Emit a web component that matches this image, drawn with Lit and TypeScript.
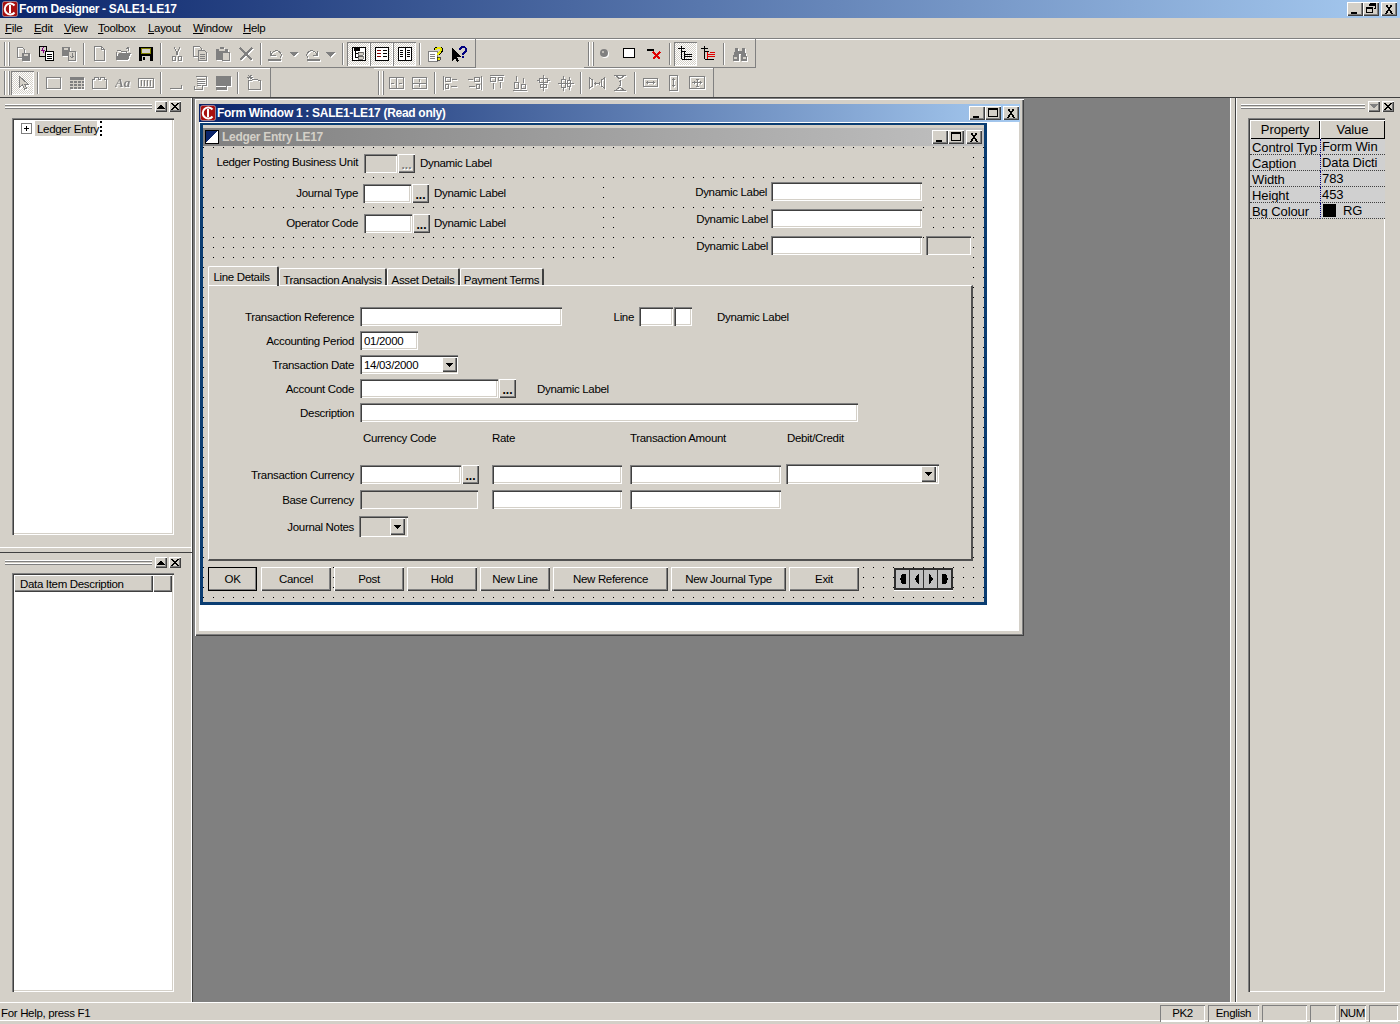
import { LitElement, html, css, svg, nothing } from "lit";
import { customElement } from "lit/decorators.js";

const G = "#808080";
const line = (d: string, c = G) => svg`<path d=${d} fill="none" stroke=${c}/>`;
const fill = (d: string, c = G) => svg`<path d=${d} fill=${c}/>`;

const ICONS: Record<string, any> = {
  docs1: svg`${line("M2.5 1.5h5l2 2v8h-7z")}${fill("M7 7h8v8H7z")}${fill("M9 8h4v2H9z", "#d4d0c8")}`,
  docs2: svg`${line("M1.5 .5h7v10h-7z", "#000")}<path d="M7.5 5.5h8v9h-8z" fill="#fff" stroke="#000"/>${line("M9 8h5M9 10h5M9 12h5", "#000")}${line("M5.5 1.5l-2 3h3l-2 3", "#800080")}`,
  docs3: svg`${fill("M1 1h8v9H1z")}${fill("M3 2h4v2H3z", "#d4d0c8")}<path d="M7.5 5.5h7v9h-7z" fill="#d4d0c8" stroke=${G}/>${line("M11 7v5M9 10l2 2 2-2")}`,
  new: line("M2.5 .5h7l3 3v11h-10zM9.5 .5v3h3"),
  open: svg`${line("M1.5 4.5h4l1 1h5v2M11.5 2.5l2-1v3")}${fill("M1 14V6h1v5l2-4h12l-3 7z")}`,
  save: svg`<path d="M1 1h14v14H1z" fill="#000"/><path d="M3 2h10v6H3z" fill="#808000"/><path d="M4 10h8v5H4z" fill="#d4d0c8"/><path d="M5 11h2v3H5z" fill="#000"/><path d="M4 3h8v4H4z" fill="#d4d0c8"/>`,
  cut: svg`${line("M5 1l4 8M11 1L7 9")}${line("M3.5 10.5h3v4h-3zM9.5 10.5h3v4h-3z")}`,
  copy: svg`${line("M1.5 .5h6l2 2v8h-8z")}<path d="M6.5 4.5h6l2 2v8h-8z" fill="#d4d0c8" stroke=${G}/>${line("M8 8h5M8 10h5M8 12h5")}`,
  paste: svg`${fill("M1 3h4V1h4v2h4v11H1z")}<path d="M7.5 6.5h7v8h-7z" fill="#d4d0c8" stroke=${G}/>${fill("M4 3h6v2H4z", "#d4d0c8")}`,
  del: svg`<path d="M2 2l12 12M14 2L2 14" stroke=${G} stroke-width="2" fill="none"/>`,
  undo: svg`${line("M2.5 4.5v5h5M3 9c2-5 8-6 10-1 1 2 0 3-1 4")}${fill("M0 13h13v2H0z")}`,
  redo: svg`${line("M13.5 4.5v5h-5M13 9C11 4 5 3 3 8c-1 2 0 3 1 4")}${fill("M3 13h13v2H3z")}`,
  drop: fill("M3 6h9l-4.5 5z"),
  tree: svg`<path d="M1.5 1.5h13v13h-13z" fill="#fff" stroke="#000"/>${line("M4.5 3v9M4 3.5h5M5 7.500h6M5 11.500h7", "#000")}<path d="M7 6h5v3H7zM7 10h5v3H7z" fill="#d4d0c8" stroke="#000" stroke-width=".5"/><path d="M3 2h6v3H3z" fill="#000"/>`,
  list: svg`<path d="M1.5 1.5h13v13h-13z" fill="#fff" stroke="#000"/>${line("M3 4.5h4M3 7.5h4M3 10.5h4", "#800000")}${line("M9 4.5h4M9 7.5h4M9 10.5h4", "#000")}`,
  book: svg`<path d="M1.5 1.5h13v13h-13z" fill="#fff" stroke="#000"/>${line("M8 2v12M3 4.5h3M3 6.5h3M3 8.5h3M3 10.5h3M10 4.5h3M10 6.5h3M10 8.5h3M10 10.5h3", "#000")}`,
  helpdoc: svg`<path d="M.5 5.5h9v10h-9z" fill="#fff" stroke=${G}/>${line("M2 8h5M2 10h5M2 12h5")}<path d="M6.5 4c0-4 8-4 8 0 0 3-3 2-3 5" fill="none" stroke="#000" stroke-width="1"/><path d="M8 4c0-2 5-3 5 0 0 2-3 2-3 5" fill="none" stroke="#e8e800" stroke-width="2"/><path d="M9 11h3v3H9z" fill="#e8e800" stroke="#000" stroke-width=".6"/>`,
  helparrow: svg`<path d="M1 1v14l3-3 2 4 2-1-2-4h4z" fill="#000"/><path d="M9 4c0-4 6-4 6 0 0 3-3 2-3 5" fill="none" stroke="#000080" stroke-width="2"/><path d="M11 10h2v2h-2z" fill="#000080"/>`,
  dot: svg`<circle cx="7" cy="7" r="4" fill=${G} shape-rendering="auto"/><circle cx="6" cy="6" r="1" fill="#d4d0c8" shape-rendering="auto"/>`,
  rect: svg`<path d="M2.5 2.5h11v9h-11z" fill="#fff" stroke="#000"/>`,
  redx: svg`${fill("M1 3h7v2H1z", "#000")}<path d="M7 6l7 7M14 6l-7 7" stroke="#e00000" stroke-width="2" fill="none"/>`,
  t1: svg`${line("M3.5 0v13M0 2.5h7M4 5.5h4M6.5 6v7M7 8.5h7M7 10.5h7M4 13.5h10", "#000")}`,
  t2: svg`${line("M3.5 0v13M0 2.5h7M4 5.5h4M4 13.5h9", "#000")}${line("M6.5 6v7M7 8.5h7M7 10.5h7M9 6.5h5", "#e00000")}`,
  binoc: svg`${fill("M3 2h3v3h4V2h3v3l2 6v4H9V8H7v7H1v-4l2-6z")}${fill("M2 11h3v2H2zM11 11h3v2h-3z", "#d4d0c8")}`,
  arrow: svg`<path d="M4.5 1.5v11l3-2.5 2 4 2-1-2-4h3.500z" fill="#d4d0c8" stroke=${G}/>`,
  box: svg`<path d="M.5 2.500h14v11h-14z" fill="none" stroke=${G}/>`,
  grid: svg`${fill("M1 2h14v12H1z")}${line("M1 5.500h14M1 8.500h14M1 11.500h14M4.500 5v9M8.500 5v9M12.500 5v9", "#d4d0c8")}`,
  tab: line("M.5 4.500v9h14v-9h-2v-2h-4v2h-2v-2h-4v2z"),
  aa: svg`<text x="0" y="12" font-family="'Liberation Serif',serif" font-style="italic" font-weight="700" font-size="13" letter-spacing="0" fill=${G}>Aa</text>`,
  ab: svg`${line("M.5 3.500h15v9H.5z")}${line("M3.500 5v6M6.500 5v6M9.500 5v6M12.500 5v6")}`,
  corner: line("M1 13.500h11.500V10"),
  form: svg`${line("M3.500 1.500h11v9h-4v4h-8v-4")}${line("M5 4h8M5 6h8M5 8h8M5 10h4")}`,
  shadow: svg`${fill("M1 1h15v10h-4v4H1z")}${fill("M1 11h10v1H1z", "#fff")}`,
  star: svg`${line("M2.500 5.500h3l1-1h5l1 1h2v9h-12z")}${line("M4 0v4M1 2h6M2 0l4 4M6 0L2 4")}`,
  c1: svg`${line("M.5 2.500h14v11H.5zM7.500 3v10M2 8h3M10 8h3")}`,
  c2: svg`${line("M.5 2.500h14v11H.5zM1 8h13M7.500 4v3M7.500 9v3")}`,
  a1: svg`${line("M.5 1v14M2.500 2.500h5v4h-5zM2.500 9.500h3v4h-3zM9 4.500h5M7.500 11.500h6")}`,
  a2: svg`${line("M15.500 1v14M8.500 2.500h5v4h-5zM10.500 9.500h3v4h-3zM2 4.500h5M3 11.500h6")}`,
  a3: svg`${line("M1 .5h14M1.500 2.500h5v4h-5zM9.500 2.500h4v3h-4zM4 8v6M11.500 7v6")}`,
  a4: svg`${line("M1 15.500h14M2.500 7.500h4v6h-4zM9.500 9.500h4v4h-4zM4.500 1v5M11.500 3v5")}`,
  a5: svg`${line("M8.500 0v16M4.500 3.500h8v4h-8zM5.500 9.500h6v3h-6zM2 5.500h2M13 5.500h2")}`,
  a6: svg`${line("M0 8.500h16M3.500 4.500h4v8h-4zM9.500 5.500h3v6h-3zM5.500 1v3M5.500 13v3M11 2v3M11 12v3")}`,
  s1: svg`${line("M.5 3v10l3-2V5zM15.500 3v10l-3-2V5zM5 8.500h6M6 7v3M10 7v3")}`,
  s2: svg`${line("M2 .5h12M2 15.500h12M4 1l4 3 4-3M4 15l4-3 4 3M8 5v6M7 6h2M7 10h2")}`,
  w1: svg`${line("M.5 3.500h14v8H.5zM3 7.500h9M4.500 6v3M10.500 6v3")}`,
  w2: svg`${line("M3.500 .5h8v15h-8zM7.500 3v9M6 4.500h3M6 10.500h3")}`,
  w3: svg`${line("M.5 1.500h15v12H.5zM3 7.500h10M8 4v7M5 6v3M11 6v3M6.500 4h3M6.500 11h3")}`,
};
const DIS = new Set(["docs1", "docs3", "new", "open", "cut", "copy", "paste", "del", "undo", "redo", "drop", "dot", "binoc", "arrow", "box", "grid", "tab", "aa", "ab", "corner", "form", "shadow", "star", "c1", "c2", "a1", "a2", "a3", "a4", "a5", "a6", "s1", "s2", "w1", "w2", "w3"]);

type Tool = string | { i: string; w?: number; on?: boolean };
type Band = { start: number; end: number; gripGap: number; tools: Tool[] };
const BANDS: Band[][] = [
  [
    { start: 0, end: 476, gripGap: 1, tools: [
      "docs1", "docs2", "docs3", "|", "new", "open", "save", "|", "cut", "copy", "paste", "del", "|",
      { i: "undo", w: 22 }, { i: "drop", w: 15 }, { i: "redo", w: 20 }, { i: "drop", w: 17 }, "|",
      { i: "tree", on: true }, { i: "list", on: true }, { i: "book", on: true }, "|", "helpdoc", "helparrow",
    ] },
    { start: 584, end: 756, gripGap: -1, tools: [
      { i: "dot", w: 24 }, { i: "rect", w: 24 }, { i: "redx", w: 25 }, "|", { i: "t1", on: true }, "t2", "|", "binoc",
    ] },
  ],
  [
    { start: 0, end: 271, gripGap: 1, tools: [
      { i: "arrow", on: true }, "|", "box", "grid", "tab", "aa", "ab", "|", "corner", "form", "shadow", "|", "star",
    ] },
    { start: 374, end: 714, gripGap: 1, tools: [
      "c1", "c2", "|", "a1", "a2", "a3", "a4", "a5", "a6", "|", "s1", "s2", "|", "w1", "w2", "w3",
    ] },
  ],
];

const logo = svg`<svg class="logo" viewBox="0 0 16 16" width="16" height="16"><rect x=".5" y=".5" width="15" height="15" rx="2" fill="#a81010" stroke="#e0e0e0" stroke-width=".5"/><path d="M12.500 4.500A5.500 5.500 0 1 0 12.500 11.500" fill="none" stroke="#fff" stroke-width="2"/><path d="M8 4v8" stroke="#fff" stroke-width="2"/></svg>`;

const GLYPH: Record<string, any> = {
  min: svg`<path d="M3 10h6v2H3z" fill="#000"/>`,
  max: svg`<path d="M2.500 2.500h9v8h-9z" fill="none" stroke="#000"/><path d="M2 2h10v2H2z" fill="#000"/>`,
  res: svg`<path d="M5.500 1.500h6v5h-2M5 2h6v1H5z" fill="none" stroke="#000"/><path d="M2.500 5.500h6v5h-6z" fill="#d4d0c8" stroke="#000"/><path d="M2 5h7v1.500H2z" fill="#000"/>`,
  close: svg`<path d="M3 2.500l2 0 2 3 2-3 2 0-3 4.500 3 4.500-2 0-2-3-2 3-2 0 3-4.500z" fill="#000"/>`,
};
const capBtn = (k: string, cls = "") => html`<span class="cap ${cls}"><svg viewBox="0 0 14 14" width="14" height="14">${GLYPH[k]}</svg></span>`;

const CX = 203, CY = 146;
const at = (x: number, y: number, w: number, h: number) =>
  `left:${x - CX}px;top:${y - CY}px;width:${w}px;height:${h}px`;

const COVERS = [
  [205, 149, 766, 27], [205, 179, 397, 27], [205, 209, 397, 27], [605, 179, 325, 27], [616, 209, 314, 27],
  [616, 239, 350, 20], [207, 262, 764, 302], [773, 179, 150, 25], [773, 206, 150, 25],
];
const LABELS: [string, number, number, "r" | "l"][] = [
  ["Ledger Posting Business Unit", 358, 162, "r"], ["Dynamic Label", 420, 163, "l"],
  ["Journal Type", 358, 193, "r"], ["Dynamic Label", 434, 193, "l"],
  ["Operator Code", 358, 223, "r"], ["Dynamic Label", 434, 223, "l"],
  ["Dynamic Label", 767, 192, "r"], ["Dynamic Label", 768, 219, "r"], ["Dynamic Label", 768, 246, "r"],
  ["Transaction Reference", 354, 317, "r"], ["Line", 634, 317, "r"], ["Dynamic Label", 717, 317, "l"],
  ["Accounting Period", 354, 341, "r"], ["Transaction Date", 354, 365, "r"], ["Account Code", 354, 389, "r"],
  ["Dynamic Label", 537, 389, "l"], ["Description", 354, 413, "r"],
  ["Currency Code", 363, 438, "l"], ["Rate", 492, 438, "l"], ["Transaction Amount", 630, 438, "l"], ["Debit/Credit", 787, 438, "l"],
  ["Transaction Currency", 354, 475, "r"], ["Base Currency", 354, 500, "r"], ["Journal Notes", 354, 527, "r"],
];
const FIELDS: [number, number, number, number, boolean, string][] = [
  [364, 154, 33, 19, true, ""], [363, 184, 48, 19, false, ""], [364, 214, 48, 19, false, ""],
  [771, 182, 151, 19, false, ""], [771, 209, 151, 19, false, ""], [771, 236, 151, 19, false, ""], [926, 236, 45, 19, true, ""],
  [360, 307, 202, 19, false, ""], [639, 307, 34, 19, false, ""], [674, 307, 18, 19, false, ""],
  [360, 331, 58, 19, false, "01/2000"], [360, 355, 98, 19, false, "14/03/2000"], [360, 379, 138, 19, false, ""],
  [360, 403, 498, 19, false, ""], [360, 465, 101, 19, false, ""], [492, 465, 130, 19, false, ""], [630, 465, 151, 19, false, ""],
  [786, 464, 153, 20, false, ""], [360, 490, 118, 19, true, ""], [492, 490, 130, 19, false, ""], [630, 490, 151, 19, false, ""],
  [359, 516, 49, 21, true, ""],
];
const DOTS: [number, number, boolean][] = [[398, 154, true], [412, 184, false], [413, 214, false], [499, 379, false], [462, 465, false]];
const ARROWS: [number, number, number, number][] = [[442, 357, 15, 15], [921, 466, 15, 16], [390, 518, 15, 17]];
const BTNS: [string, number, number][] = [
  ["OK", 208, 49], ["Cancel", 261, 70], ["Post", 334, 70], ["Hold", 407, 70], ["New Line", 480, 70],
  ["New Reference", 553, 115], ["New Journal Type", 671, 115], ["Exit", 789, 70],
];
const TABS: [string, number][] = [["Line Details", 71], ["Transaction Analysis", 108], ["Asset Details", 73], ["Payment Terms", 84]];
const PROPS: [string, string, boolean?][] = [
  ["Control Typ", "Form Win"], ["Caption", "Data Dicti"], ["Width", "783"], ["Height", "453"], ["Bg Colour", "RG", true],
];
const MENUS: [string, string, number][] = [["F", "ile", 29], ["E", "dit", 30], ["V", "iew", 34], ["T", "oolbox", 50], ["L", "ayout", 45], ["W", "indow", 50], ["H", "elp", 30]];
const PANES: [string, number][] = [["PK2", 45], ["English", 51], ["", 45], ["", 26], ["NUM", 27], ["", 29]];

@customElement("app-root")
export class AppRoot extends LitElement {
  static styles = css`
    :host { display: flex; flex-direction: column; width: 1400px; height: 1024px; overflow: hidden; background: #d4d0c8; font: 11.5px/16px "Liberation Sans", Arial, sans-serif; color: #000; letter-spacing: -0.33px; }
    svg { display: block; shape-rendering: crispEdges; }
    .logo { shape-rendering: auto; flex: none; margin-right: 1px; }
    .title { height: 18px; flex: none; display: flex; align-items: center; padding: 0 3px 0 2px; color: #fff; font: 700 12px/16px "Liberation Sans", sans-serif; letter-spacing: -0.35px; background: linear-gradient(90deg, #0a246a, #a6caf0); }
    .title .txt { flex: 1; }
    .cap { width: 16px; height: 14px; flex: none; display: flex; align-items: center; justify-content: center; background: #d4d0c8; box-shadow: inset 1px 1px 0 #fff, inset -1px -1px 0 #404040, inset -2px -2px 0 #808080; }
    .gapr { margin-left: 2px; }
    .menu { height: 20px; flex: none; display: flex; align-items: center; padding-left: 5px; }
    .menu span { flex: none; }
    .toprow { height: 30px; flex: none; display: flex; box-shadow: inset 0 1px 0 #808080, inset 0 2px 0 #fff; }
    .row2 { box-shadow: none; border-bottom: 1px solid #404040; height: 29px; }
    .band { flex: none; display: flex; align-items: center; box-sizing: border-box; height: 100%; padding: 2px 0 0 4px; border-right: 1px solid #808080; border-bottom: 1px solid #808080; }
    .row2 .band { padding-top: 1px; box-shadow: inset 0 1px 0 #fff; border-bottom: 0; }
    .grip { width: 6px; height: 24px; flex: none; box-sizing: border-box; border-left: 1px solid #808080; border-right: 1px solid #808080; box-shadow: inset 1px 0 0 #fff, inset -1px 0 0 #fff; background: #d4d0c8; }
    .tool { width: 23px; height: 24px; flex: none; display: flex; align-items: center; justify-content: center; box-sizing: border-box; }
    .tool.on { background: repeating-conic-gradient(#fff 0 25%, #d4d0c8 0 50%) 0 0/2px 2px; box-shadow: inset 1px 1px 0 #808080, inset -1px -1px 0 #fff; }
    .dis { filter: drop-shadow(1px 1px 0 #fff); }
    .sep { width: 8px; flex: none; height: 24px; position: relative; }
    .sep::after { content: ""; position: absolute; left: 3px; top: 1px; bottom: 1px; width: 1px; background: #808080; box-shadow: 1px 0 0 #fff; }
    .main { flex: 1; display: flex; min-height: 0; }
    .left { width: 193px; flex: none; box-sizing: border-box; display: flex; flex-direction: column; }
    .lcol { flex: 1; display: flex; flex-direction: column; border-right: 1px solid #404040; box-shadow: inset -1px 0 0 #fff; min-height: 0; }
    .dock { box-sizing: border-box; display: flex; flex-direction: column; padding: 3px 3px 0 0; }
    .dock.a { height: 450px; border-bottom: 1px solid #fff; }
    .dock.b { flex: 1; margin-top: 4px; padding-top: 4px; border-top: 1px solid #404040; }
    .grabrow { display: flex; align-items: center; height: 11px; margin: 0 8px 0 5px; flex: none; }
    .grab { flex: 1; height: 6px; margin-right: 1px; background: linear-gradient(#fff 0 1px, #808080 1px 2px, #d4d0c8 2px 3px, #fff 3px 4px, #808080 4px 5px, #d4d0c8 5px); }
    .mini { width: 12px; height: 11px; margin-left: 2px; flex: none; display: flex; align-items: center; justify-content: center; background: #d4d0c8; box-shadow: inset 1px 1px 0 #fff, inset -1px -1px 0 #404040, inset -2px -2px 0 #808080; }
    .well { flex: 1; margin: 6px 15px 12px 12px; box-sizing: border-box; background: #fff; box-shadow: inset 1px 1px 0 #808080, inset 2px 2px 0 #404040, inset -1px -1px 0 #fff, inset -2px -2px 0 #d4d0c8; padding: 2px; display: flex; flex-direction: column; min-height: 0; }
    .dock.b .well { margin: 5px 15px 10px 12px; }
    .node { display: flex; align-items: center; margin: 1px 0 0 7px; height: 15px; }
    .exp { width: 9px; height: 9px; border: 1px solid #808080; flex: none; margin-right: 3px; display: block; }
    .sel { background: #d4d0c8; padding: 0 2px; height: 15px; width: 62px; box-sizing: border-box; white-space: nowrap; margin-right: 3px; }
    .caret { width: 1px; height: 15px; border-left: 2px dotted #000; }
    .gridhead { display: flex; height: 17px; flex: none; background: #d4d0c8; }
    .gridhead div { box-sizing: border-box; box-shadow: inset 1px 1px 0 #fff, inset -1px -1px 0 #404040, inset -2px -2px 0 #808080; padding-left: 6px; line-height: 18px; }
    .gridhead .c1 { width: 139px; flex: none; } .gridhead .c2 { flex: 1; }
    .mdi { flex: 1; position: relative; background: #808080; min-width: 0; }
    .win { position: absolute; left: 2px; top: 1px; width: 829px; height: 537px; box-sizing: border-box; padding: 5px 4px 4px; background: #d4d0c8; display: flex; flex-direction: column; box-shadow: inset 1px 1px 0 #fff, inset -1px -1px 0 #404040, inset -2px -2px 0 #808080; }
    .wintitle { height: 18px; flex: none; display: flex; align-items: center; padding: 0 1px 0 1px; color: #fff; font: 700 12px/16px "Liberation Sans", sans-serif; letter-spacing: -0.3px; background: linear-gradient(90deg, #0a246a, #a6caf0); }
    .wintitle .txt { flex: 1; }
    .client { flex: 1; background: #fff; box-sizing: border-box; border-right: 1px solid #d4d0c8; border-bottom: 1px solid #d4d0c8; }
    .inner { width: 787px; height: 482px; margin: 1px 0 0 1px; box-sizing: border-box; border: 3px solid #0a3d72; border-top: 2px solid #0a3d72; display: flex; flex-direction: column; background: #d4d0c8; }
    .innertitle { height: 18px; flex: none; margin-top: 3px; display: flex; align-items: center; padding: 0 2px 0 2px; color: #d4d0c8; font: 700 12px/16px "Liberation Sans", sans-serif; letter-spacing: -0.3px; background: linear-gradient(90deg, #808080, #c0c0c0); }
    .innertitle .txt { flex: 1; padding-left: 3px; }
    .canvas { flex: 1; position: relative; background-image: radial-gradient(circle at .5px .5px, #000 .7px, transparent .7px); background-size: 10px 10px; background-position: 0 1px; }
    .abs { position: absolute; display: block; }
    .cover { background: #d4d0c8; }
    .lab { white-space: nowrap; line-height: 16px; }
    .lab.r { text-align: right; }
    .field { box-sizing: border-box; background: #fff; box-shadow: inset 1px 1px 0 #808080, inset 2px 2px 0 #404040, inset -1px -1px 0 #fff, inset -2px -2px 0 #d4d0c8; padding: 2px 0 0 4px; line-height: 16px; }
    .field.off { background: #d4d0c8; }
    .btn { box-sizing: border-box; background: #d4d0c8; display: flex; align-items: center; justify-content: center; box-shadow: inset 1px 1px 0 #fff, inset -1px -1px 0 #404040, inset -2px -2px 0 #808080; }
    .btn.def { outline: 1px solid #000; outline-offset: -1px; }
    .dots { font-weight: 700; padding-top: 3px; font-size: 12px; letter-spacing: 0; }
    .dots.off { color: #808080; text-shadow: 1px 1px 0 #fff; }
    .panelwrap { display: flex; flex-direction: column; }
    .tabs { display: flex; align-items: flex-end; flex: none; }
    .tab { box-sizing: border-box; flex: none; height: 18px; text-align: center; padding-top: 4px; line-height: 15px; border-top: 1px solid #fff; border-left: 1px solid #fff; border-right: 2px solid #404040; border-radius: 2px 2px 0 0; border-bottom: 1px solid #fff; }
    .tab.act { height: 20px; padding: 3px 3px 0 0; border-bottom: 0; position: relative; }
    .panel { flex: 1; box-sizing: border-box; border-left: 1px solid #fff; border-right: 2px solid #505050; border-bottom: 2px solid #505050; border-top: 1px solid #fff; margin-top: -1px; }
    .nav { display: flex; box-sizing: border-box; border: 2px solid #303030; background: #c0c0c0; box-shadow: 0 1px 0 #fff; }
    .nav span { flex: 1; display: flex; align-items: center; justify-content: center; border-right: 1px solid #303030; }
    .nav span:last-child { border-right: 0; }
    .right { width: 170px; flex: none; display: flex; flex-direction: column; padding-left: 4px; box-sizing: border-box; border-left: 1px solid #fff; }
    .rin { flex: 1; display: flex; flex-direction: column; border-left: 1px solid #404040; box-shadow: inset 1px 0 0 #fff; min-height: 0; padding-top: 3px; }
    .rin .grabrow { margin: 0 6px 0 5px; }
    .ptable { flex: 1; margin: 6px 15px 10px 12px; box-sizing: border-box; padding: 2px; background: #d4d0c8; box-shadow: inset 1px 1px 0 #808080, inset 2px 2px 0 #404040, inset -1px -1px 0 #fff, inset -2px -2px 0 #d4d0c8; font-size: 13px; letter-spacing: -0.1px; }
    .pgrid { display: grid; grid-template-columns: 70px 65px; }
    .phead { height: 19px; line-height: 19px; text-align: center; box-shadow: inset 1px 1px 0 #fff, inset -1px -1px 0 #000; }
    .pcell { height: 16px; line-height: 17px; background: #d0d0d0; padding-left: 2px; white-space: nowrap; overflow: hidden; border-bottom: 1px dotted #404040; box-sizing: border-box; }
    .pcell.v { border-left: 1px dotted #000080; padding-left: 1px; display: flex; align-items: center; }
    .swatch { width: 13px; height: 13px; background: #000; margin: 0 7px 0 1px; flex: none; }
    .status { height: 22px; flex: none; display: flex; align-items: flex-start; padding: 2px 2px 0 1px; box-sizing: border-box; border-top: 1px solid #fff; box-shadow: inset 0 -3px 0 #d4d0c8, inset 0 -4px 0 #fff; }
    .status .help { flex: 1; line-height: 17px; }
    .pane { box-sizing: border-box; height: 17px; flex: none; margin-left: 3px; text-align: center; line-height: 17px; box-shadow: inset 1px 1px 0 #808080, inset -1px -1px 0 #fff; }
  `;

  private band(b: Band, prevEnd: number) {
    return html`<div class="band" style="margin-left:${b.start - prevEnd}px;width:${b.end - b.start}px">
      <span class="grip" style="margin-right:${b.gripGap}px"></span>
      ${b.tools.map((t) => {
        if (t === "|") return html`<span class="sep"></span>`;
        const o = typeof t === "string" ? { i: t } : t;
        return html`<span class="tool ${o.on ? "on" : ""}" style=${o.w ? `width:${o.w}px` : nothing as any}>
          <svg class=${DIS.has(o.i) ? "dis" : ""} viewBox="0 0 16 16" width="16" height="16">${ICONS[o.i]}</svg></span>`;
      })}
    </div>`;
  }

  private mini(up: boolean, on = true) {
    return html`<span class="mini"><svg viewBox="0 0 8 6" width="8" height="6"><path d=${up ? "M4 0l4 5H0z" : "M0 0h8L4 5z"} fill=${on ? "#000" : "#808080"}/></svg></span>
    <span class="mini"><svg viewBox="0 0 8 7" width="8" height="7">${svg`<path d="M0 0h2l2 2.500L6 0h2L5 3.500 8 7H6L4 4.500 2 7H0l3-3.500z" fill="#000"/>`}</svg></span>`;
  }

  render() {
    return html`
      <div class="title">${logo}<span class="txt">Form Designer - SALE1-LE17</span>${capBtn("min")}${capBtn("res")}${capBtn("close", "gapr")}</div>
      <div class="menu">${MENUS.map(([u, r, w]) => html`<span style="width:${w}px"><u>${u}</u>${r}</span>`)}</div>
      ${BANDS.map((row, i) => html`<div class="toprow ${i ? "row2" : ""}">${row.map((b, j) => this.band(b, j ? row[j - 1].end : 0))}</div>`)}
      <div class="main">
        <div class="left"><div class="lcol">
          <div class="dock a">
            <div class="grabrow"><span class="grab"></span>${this.mini(true)}</div>
            <div class="well">
              <div class="node">
                <svg class="exp" viewBox="0 0 9 9">${svg`<path d="M2 4.500h5M4.500 2v5" stroke="#000"/>`}</svg>
                <span class="sel">Ledger Entry</span><span class="caret"></span>
              </div>
            </div>
          </div>
          <div class="dock b">
            <div class="grabrow"><span class="grab"></span>${this.mini(true)}</div>
            <div class="well">
              <div class="gridhead"><div class="c1">Data Item Description</div><div class="c2"></div></div>
            </div>
          </div>
        </div></div>

        <div class="mdi">
          <div class="win">
            <div class="wintitle">${logo}<span class="txt">Form Window 1 : SALE1-LE17 (Read only)</span>${capBtn("min")}${capBtn("max")}${capBtn("close", "gapr")}</div>
            <div class="client">
              <div class="inner">
                <div class="innertitle">
                  <svg viewBox="0 0 14 14" width="14" height="14">${svg`<path d="M.5.5h13v13H.5z" fill="#fff" stroke="#000"/><path d="M1 1h11L2 12H1z" fill="#0a246a"/>`}</svg>
                  <span class="txt">Ledger Entry LE17</span>${capBtn("min")}${capBtn("max")}${capBtn("close", "gapr")}
                </div>
                <div class="canvas">
                  ${COVERS.map(([x, y, w, h]) => html`<span class="abs cover" style=${at(x, y, w, h)}></span>`)}
                  <div class="abs panelwrap" style=${at(208, 266, 765, 295)}>
                    <div class="tabs">${TABS.map(([t, w], i) => html`<span class="tab ${i ? "" : "act"}" style="width:${w}px">${t}</span>`)}</div>
                    <div class="panel"></div>
                  </div>
                  ${LABELS.map(([t, x, cy, al]) => al === "r"
                    ? html`<span class="abs lab r" style=${at(x - 170, cy - 8, 170, 16)}>${t}</span>`
                    : html`<span class="abs lab" style=${at(x, cy - 8, 130, 16)}>${t}</span>`)}
                  ${FIELDS.map(([x, y, w, h, off, t]) => html`<span class="abs field ${off ? "off" : ""}" style=${at(x, y, w, h)}>${t}</span>`)}
                  ${DOTS.map(([x, y, off]) => html`<span class="abs btn dots ${off ? "off" : ""}" style=${at(x, y, 17, 19)}>...</span>`)}
                  ${ARROWS.map(([x, y, w, h]) => html`<span class="abs btn" style=${at(x, y, w, h)}><svg viewBox="0 0 7 4" width="7" height="4">${svg`<path d="M0 0h7L3.500 4z" fill="#000"/>`}</svg></span>`)}
                  ${BTNS.map(([t, x, w], i) => html`<span class="abs btn ${i ? "" : "def"}" style=${at(x, 567, w, 24)}>${t}</span>`)}
                  <div class="abs nav" style=${at(894, 568, 59, 22)}>
                    <span><svg viewBox="0 0 8 12" width="8" height="12">${svg`<path d="M3 1h4v10H3L1 6z" fill="#000"/>`}</svg></span>
                    <span><svg viewBox="0 0 8 12" width="8" height="12">${svg`<path d="M5 1h1v10H5L2 6z" fill="#000"/>`}</svg></span>
                    <span><svg viewBox="0 0 8 12" width="8" height="12">${svg`<path d="M2 1h1l3 5-3 5H2z" fill="#000"/>`}</svg></span>
                    <span><svg viewBox="0 0 8 12" width="8" height="12">${svg`<path d="M1 1h4l2 5-2 5H1z" fill="#000"/>`}</svg></span>
                  </div>
                </div>
              </div>
            </div>
          </div>
        </div>

        <div class="right"><div class="rin">
          <div class="grabrow"><span class="grab"></span>${this.mini(false, false)}</div>
          <div class="ptable">
            <div class="pgrid">
              <div class="phead">Property</div><div class="phead">Value</div>
              ${PROPS.map(([k, v, sw]) => html`<div class="pcell">${k}</div><div class="pcell v">${sw ? html`<span class="swatch"></span>` : ""}${v}</div>`)}
            </div>
          </div>
        </div></div>
      </div>
      <div class="status">
        <span class="help">For Help, press F1</span>
        ${PANES.map(([t, w]) => html`<span class="pane" style="width:${w}px">${t}</span>`)}
      </div>
    `;
  }
}
